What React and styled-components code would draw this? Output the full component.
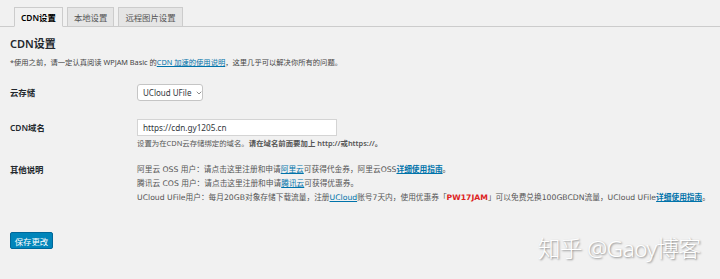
import React from "react";
import styled, { createGlobalStyle } from "styled-components";
import { ChevronDown } from "lucide-react";

const GlobalStyle = createGlobalStyle`
  html, body {
    margin: 0;
    padding: 0;
    background: #f1f1f1;
  }
  body {
    font-family: "Noto Sans", "Noto Sans CJK SC", sans-serif;
    color: #444;
  }
  * {
    box-sizing: border-box;
  }
`;

export default function App() {
  return (
    <Page>
      <GlobalStyle />
      <Tabs>
        <Tab active>CDN设置</Tab>
        <Tab>本地设置</Tab>
        <Tab>远程图片设置</Tab>
      </Tabs>

      <Content>
        <Title>CDN设置</Title>
        <Note>
          *使用之前，请一定认真阅读 WPJAM Basic 的<A href="#">CDN 加速的使用说明</A>，这里几乎可以解决你所有的问题。
        </Note>

        <Form>
          <Row top={16}>
            <Label>云存储</Label>
            <Field>
              <Select>
                <span>UCloud UFile</span>
                <ChevronDown size={8} strokeWidth={2} />
              </Select>
            </Field>
          </Row>

          <Row top={18}>
            <Label>CDN域名</Label>
            <Field>
              <Input>https://cdn.gy1205.cn</Input>
              <Desc>
                设置为在CDN云存储绑定的域名。<b>请在域名前面要加上 http://或https://。</b>
              </Desc>
            </Field>
          </Row>

          <Row top={14}>
            <Label tall>其他说明</Label>
            <Field>
              <Line>
                阿里云 OSS 用户：请点击这里注册和申请<A href="#">阿里云</A>可获得代金券，阿里云OSS<A href="#" bold>详细使用指南</A>。
              </Line>
              <Line>
                腾讯云 COS 用户：请点击这里注册和申请<A href="#">腾讯云</A>可获得优惠券。
              </Line>
              <Line>
                UCloud UFile用户：每月20GB对象存储下载流量，注册<A href="#">UCloud</A>账号7天内，使用优惠券「<Code>PW17JAM</Code>」可以免费兑换100GBCDN流量，UCloud UFile<A href="#" bold>详细使用指南</A>。
              </Line>
            </Field>
          </Row>
        </Form>

        <SaveButton>保存更改</SaveButton>
      </Content>

      <Watermark>知乎 @Gaoy博客</Watermark>
    </Page>
  );
}

const Page = styled.div`
  position: relative;
  width: 720px;
  height: 279px;
  overflow: hidden;
  background: #f1f1f1;
`;

const Tabs = styled.div`
  display: flex;
  gap: 4px;
  padding: 7px 0 0 14px;
  border-bottom: 1px solid #ccc;
`;

const Tab = styled.div`
  height: 20px;
  margin-bottom: -1px;
  padding: 0 6px;
  display: flex;
  align-items: center;
  font-size: 8.4px;
  font-weight: ${(p) => (p.active ? 600 : 400)};
  color: ${(p) => (p.active ? "#000" : "#555")};
  background: ${(p) => (p.active ? "#f1f1f1" : "#e5e5e5")};
  border: 1px solid #ccc;
  border-bottom-color: ${(p) => (p.active ? "#f1f1f1" : "#ccc")};
`;

const Content = styled.div`
  padding: 0 10px;
`;

const Title = styled.h2`
  margin: 10px 0 0;
  font-size: 11px;
  line-height: 14px;
  font-weight: 600;
  color: #23282d;
`;

const Note = styled.p`
  margin: 5px 0 0;
  font-size: 7.3px;
  line-height: 12px;
  color: #444;
`;

const A = styled.a`
  color: #0073aa;
  text-decoration: underline;
  font-weight: ${(p) => (p.bold ? 600 : "inherit")};
`;

const Form = styled.div`
  display: flex;
  flex-direction: column;
`;

const Row = styled.div`
  display: grid;
  grid-template-columns: 127px 1fr;
  margin-top: ${(p) => p.top}px;
`;

const Label = styled.div`
  font-size: 8.4px;
  font-weight: 600;
  color: #23282d;
  line-height: ${(p) => (p.tall ? "14px" : "17px")};
`;

const Field = styled.div`
  display: flex;
  flex-direction: column;
  align-items: flex-start;
`;

const Select = styled.div`
  width: 66px;
  height: 17px;
  padding: 0 3px 0 5px;
  display: flex;
  align-items: center;
  gap: 4px;
  background: #fff;
  border: 1px solid #c5c5c5;
  border-radius: 3px;
  font-size: 8px;
  white-space: nowrap;
  color: #32373c;
  svg {
    flex: none;
    color: #555;
  }
`;

const Input = styled.div`
  width: 200px;
  height: 17px;
  padding: 0 5px;
  display: flex;
  align-items: center;
  background: #fff;
  border: 1px solid #d4d4d4;
  font-size: 8.2px;
  color: #32373c;
`;

const Desc = styled.p`
  margin: 1px 0 0;
  font-size: 7.4px;
  line-height: 12px;
  color: #555;
  b {
    font-weight: 600;
  }
`;

const Line = styled.div`
  font-family: "DejaVu Sans", "Noto Sans CJK SC", sans-serif;
  font-size: 7.7px;
  line-height: 14px;
  color: #555;
  white-space: nowrap;
`;

const Code = styled.b`
  color: #dd2222;
  font-weight: 700;
`;

const SaveButton = styled.button`
  margin-top: 27px;
  height: 17px;
  width: 43px;
  padding: 0;
  border: 1px solid #006799;
  border-radius: 2px;
  background: #0085ba;
  color: #fff;
  font-family: inherit;
  font-size: 8.4px;
`;

const Watermark = styled.div`
  position: absolute;
  left: 538px;
  top: 231px;
  font-size: 22.5px;
  font-weight: 300;
  color: #fff;
  letter-spacing: -0.5px;
  text-shadow: 1px 1px 2px rgba(0, 0, 0, 0.45);
  white-space: nowrap;
`;
